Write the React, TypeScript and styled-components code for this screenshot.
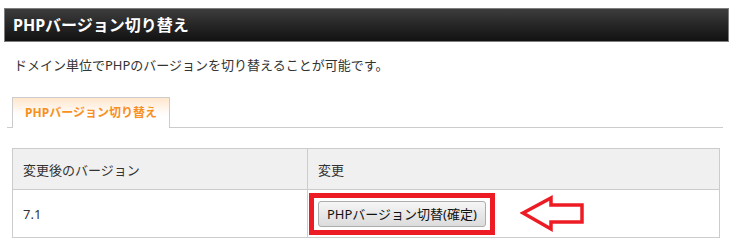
import React from "react";
import styled, { createGlobalStyle } from "styled-components";

const Global = createGlobalStyle`
  html, body { margin: 0; padding: 0; background: #fff; }
  body { font-family: "Noto Sans", "Noto Sans CJK JP", sans-serif; color: #333; }
`;

const Page = styled.div`
  padding: 8px 5px 0 4px;
`;

const TitleBar = styled.h1`
  margin: 0;
  height: 32px;
  border: 1px solid #7d7d7d;
  background: linear-gradient(to bottom, #3d3d3d 0%, #262626 50%, #121212 100%);
  color: #fff;
  font-size: 16px;
  font-weight: bold;
  line-height: 32px;
  padding-left: 8px;
  letter-spacing: 0;
`;

const Description = styled.p`
  margin: 13px 0 0 10px;
  font-size: 13px;
  line-height: 20px;
  color: #333;
`;

const TabBar = styled.div`
  display: flex;
  margin: 22px 6px 0 3px;
  padding-left: 5px;
  border-bottom: 1px solid #ccc;
`;

const Tab = styled.div`
  width: 156px;
  height: 29px;
  margin-bottom: -1px;
  border: 1px solid #ccc;
  border-bottom: none;
  background: linear-gradient(to bottom, #ffe6cc 0%, #fff8f0 40%, #fff 60%);
  color: #f7901e;
  font-size: 12px;
  font-weight: bold;
  line-height: 29px;
  text-align: center;
  box-sizing: content-box;
  padding-bottom: 1px;
`;

const Table = styled.table`
  margin: 20px 10px 0 8px;
  width: 708px;
  border-collapse: collapse;
  font-size: 13px;
  color: #333;
`;

const HeadCell = styled.th<{ $w?: number }>`
  height: 40px;
  padding: 0 10px;
  text-align: left;
  font-weight: normal;
  background: #f0f0f0;
  border: 1px solid #ccc;
  ${(p) => (p.$w ? `width: ${p.$w}px;` : "")}
`;

const Cell = styled.td`
  height: 47px;
  padding: 0 10px;
  border: 1px solid #ccc;
`;

const ActionRow = styled.div`
  display: flex;
  align-items: center;
`;

const Highlight = styled.span`
  position: relative;
  display: inline-flex;
  &::after {
    content: "";
    position: absolute;
    left: -9px;
    right: -9px;
    top: -8px;
    bottom: -8px;
    border: 5px solid #ed1c24;
    pointer-events: none;
  }
`;

const Button = styled.button`
  height: 26px;
  padding: 0 8px;
  border: 1px solid #adadad;
  border-radius: 3px;
  background: linear-gradient(to bottom, #f6f6f6 0%, #e8e8e8 50%, #dcdcdc 100%);
  font-family: "Noto Sans", "Noto Sans CJK JP", sans-serif;
  font-size: 13px;
  color: #111;
  line-height: 24px;
  white-space: nowrap;
`;

const Arrow = styled.svg`
  margin-left: 34px;
  flex: none;
`;

export default function App() {
  return (
    <>
      <Global />
      <Page>
        <TitleBar>PHPバージョン切り替え</TitleBar>
        <Description>ドメイン単位でPHPのバージョンを切り替えることが可能です。</Description>
        <TabBar>
          <Tab>PHPバージョン切り替え</Tab>
        </TabBar>
        <Table>
          <thead>
            <tr>
              <HeadCell $w={274}>変更後のバージョン</HeadCell>
              <HeadCell>変更</HeadCell>
            </tr>
          </thead>
          <tbody>
            <tr>
              <Cell>7.1</Cell>
              <Cell>
                <ActionRow>
                  <Highlight>
                    <Button type="button">PHPバージョン切替(確定)</Button>
                  </Highlight>
                  <Arrow width="66" height="38" viewBox="0 0 66 38">
                    <polygon
                      points="3,18 31,3 31,10 62,10 62,27 31,27 31,34"
                      fill="none"
                      stroke="#ed1c24"
                      strokeWidth="3.5"
                      strokeLinejoin="miter"
                    />
                  </Arrow>
                </ActionRow>
              </Cell>
            </tr>
          </tbody>
        </Table>
      </Page>
    </>
  );
}
